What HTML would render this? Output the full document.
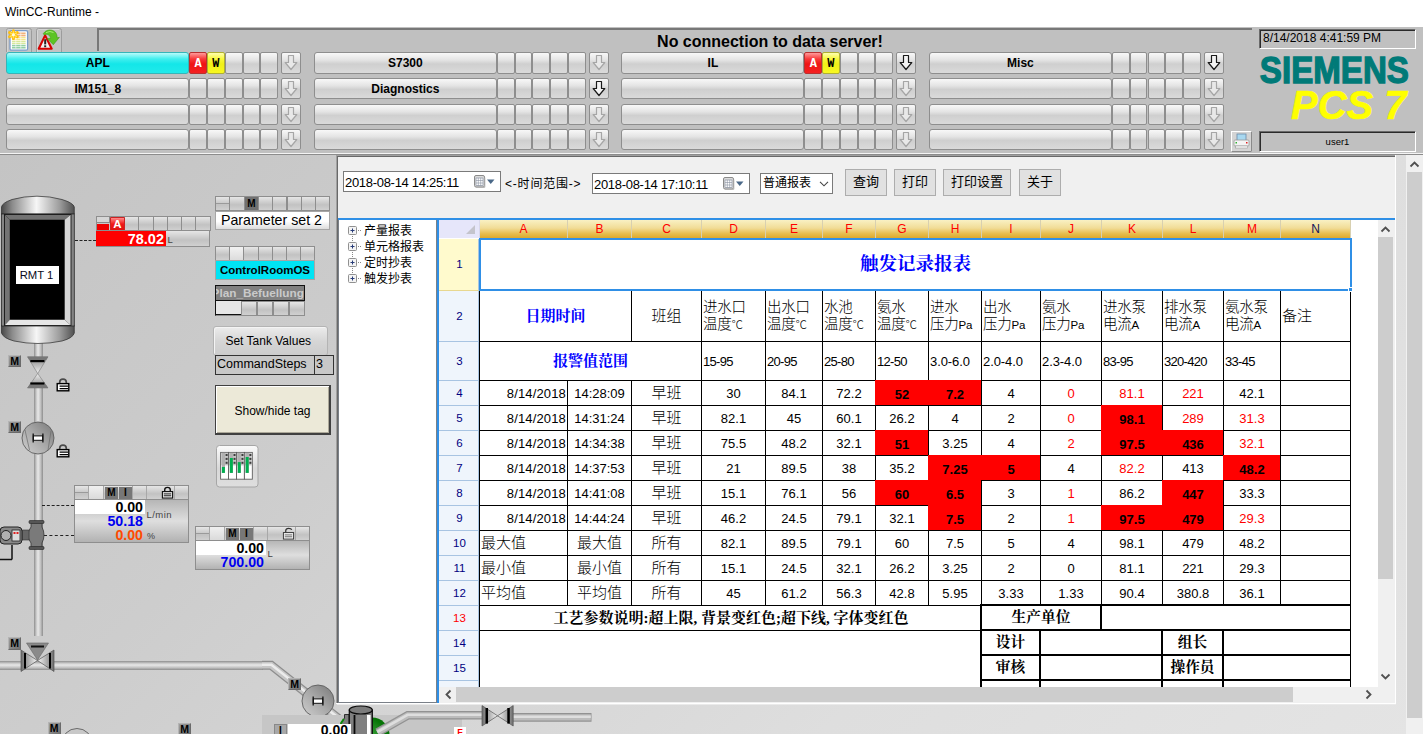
<!DOCTYPE html><html><head><meta charset="utf-8"><title>WinCC-Runtime</title><style>
*{box-sizing:border-box;margin:0;padding:0}
html,body{width:1423px;height:734px;overflow:hidden;background:#c8c8c8;font-family:"Liberation Sans","Noto Sans CJK SC",sans-serif;font-size:12px;color:#000}
.a{position:absolute}
#title{left:0;top:0;width:1423px;height:27px;background:#fff;font-size:12px;line-height:24px;padding-left:5px}
#hdr{left:0;top:27px;width:1423px;height:128px;background:#c0c0c0}
.ab{position:absolute;height:22px;border:1px solid #8e8e8e;border-radius:3px;background:linear-gradient(#f8f8f8 0%,#e4e4e4 35%,#cfcfcf 55%,#dadada 100%);font-weight:bold;font-size:12px;line-height:21px;text-align:center;white-space:nowrap;overflow:hidden}
.ab.cy{background:linear-gradient(#b8fbfb 0%,#3feeee 30%,#14e6e8 55%,#20eaea 100%);border-color:#35b5b8}
.ab.rd{background:linear-gradient(#ff9a9a 0%,#f83838 30%,#ee1414 55%,#f42020 100%);border-color:#b83030;color:#fff;font-family:"Liberation Mono",monospace;font-size:12px;line-height:23px}
.ab.yl{background:linear-gradient(#ffffb0 0%,#f8f838 30%,#f0f018 55%,#f8f820 100%);border-color:#b0b030;font-family:"Liberation Mono",monospace;font-size:12px;line-height:23px}
.sunk{position:absolute;border:1px solid;border-color:#6a6a6a #fff #fff #6a6a6a;box-shadow:inset 1px 1px 0 #2a2a2a}
#proc{left:0;top:155px;width:1423px;height:579px;background:linear-gradient(135deg,#c4c4c4 0%,#cdcdcd 30%,#dedede 70%,#e4e4e4 100%)}
.m{position:absolute;width:13px;height:12.500px;background:linear-gradient(135deg,#9e9e9e,#707070);border:1px solid;border-color:#b4b4b4 #6a6a6a #6a6a6a #b4b4b4;font-weight:bold;font-size:10.500px;line-height:11px;text-align:center}
.sc{position:absolute;border:1px solid #8e8e8e;background:linear-gradient(#e6e6e6,#c2c2c2 60%,#d0d0d0)}
.val{position:absolute;font-weight:bold;font-size:13px;text-align:right;white-space:nowrap}
.unit{position:absolute;font-size:10px;color:#444;white-space:nowrap}
#rp{left:336px;top:155px;width:1060px;height:549px;background:#f0f0f0;border:1px solid #a0a0a0;border-right-color:#fff;border-bottom-color:#fff}
.tb{position:absolute;height:23px;border:1px solid #adadad;background:#e1e1e1;font-size:12px;line-height:20px;text-align:center;font-family:"Liberation Sans","Noto Sans CJK SC",sans-serif;white-space:nowrap}
.di{position:absolute;height:21px;background:#fff;border:1px solid #7a7a7a;font-size:13px;letter-spacing:-0.3px;line-height:21px;padding-left:1px;white-space:nowrap}
.tree{position:absolute;font-size:12px;line-height:16px;white-space:nowrap;font-family:"Liberation Sans","Noto Sans CJK SC",sans-serif}
.c{position:absolute;border-right:1px solid #000;border-bottom:1px solid #000;font-size:13px;text-align:center;white-space:nowrap;overflow:hidden;font-family:"Liberation Sans","Noto Sans CJK SC",sans-serif}
.c.r{background:#f00;font-weight:bold}
.c.rt{color:#f00}
.c.l{text-align:left;padding-left:1px}
.c.rg{text-align:right;padding-right:1px}
.c.zh{font-size:15px;font-weight:300}
.c.dt{letter-spacing:0.15px}
.c i{font-style:normal;font-size:11.500px;letter-spacing:0}
.c.hd{font-size:14.5px;text-align:left;padding-left:1px;line-height:17px;white-space:normal;letter-spacing:-0.3px;font-weight:300}
.c.b{font-weight:bold;font-family:"Liberation Serif","Noto Serif CJK SC",serif}
.rh{position:absolute;left:439px;width:40px;background:#eff5fc;border-bottom:1px solid #a8c4e2;border-right:1px solid #a8c4e2;color:#000080;font-size:11.500px;text-align:center;padding-left:2px}
.ch{position:absolute;top:220px;height:18px;background:linear-gradient(#f9f1c4 0%,#f1dc96 45%,#e6be50 75%,#dca92c 100%);border-right:1px solid #d8d0b0;color:#f00;font-size:12px;line-height:19px;text-align:center}
</style></head><body>
<div class="a" id="title">WinCC-Runtime -</div>
<div class="a" id="hdr">
<svg class="a" style="left:6px;top:1px" width="58" height="24" viewBox="0 0 58 24">
<path d="M0.500 24V2.500Q0.500 0.500 2.500 0.500H23.500Q25.500 0.500 25.500 2.500V24" fill="#c3c3c3" stroke="#9c9c9c"/><path d="M1.500 24V2.500Q1.500 1.500 2.500 1.500H23" fill="none" stroke="#d6d6d6"/>
<path d="M30.500 24V2.500Q30.500 0.500 32.500 0.500H53.500Q55.500 0.500 55.500 2.500V24" fill="#c3c3c3" stroke="#9c9c9c"/><path d="M31.500 24V2.500Q31.500 1.500 32.500 1.500H53" fill="none" stroke="#d6d6d6"/>
<rect x="4" y="2.600" width="17.600" height="19.600" rx="1.500" fill="#fff" stroke="#7c9cc8" stroke-width="1.300"/>
<rect x="6" y="4.500" width="13.600" height="4.500" fill="#f3b37a"/><rect x="6" y="9" width="13.600" height="4" fill="#f4e58a"/><rect x="6" y="13" width="13.600" height="3.500" fill="#d8e89a"/><rect x="6" y="16.500" width="13.600" height="4" fill="#93cfa4"/>
<g stroke="#fff" stroke-width="0.600"><path d="M6 6.500H20M6 8.500H20M6 10.500H20M6 12.500H20M6 14.500H20M6 16.500H20M6 18.500H20M9.800 4.500V20.500M14.800 4.500V20.500"/></g>
<g stroke="#ffbe0a" stroke-width="3" stroke-linecap="round"><path d="M7.400 2.800V10.600M3.600 4.600L11.200 8.800M11.200 4.600L3.600 8.800"/></g>
<g stroke="#ffe45a" stroke-width="1.400" stroke-linecap="round"><path d="M7.400 3.600V9.800M4.400 5L10.400 8.400M10.400 5L4.400 8.400"/></g>
<circle cx="7.400" cy="6.700" r="1.500" fill="#fffbe0"/>
<path d="M39.100 7.400L32.700 20.800H45.700Z" fill="#f2f2f2" stroke="#d60000" stroke-width="2.100" stroke-linejoin="round"/>
<rect x="38.200" y="11.200" width="2" height="5.200" fill="#222"/><rect x="38.200" y="17.300" width="2" height="1.900" fill="#222"/>
<path d="M37.300 5.600Q40.500 1 46 2.200Q51 3.500 51.200 9.800L53.400 9.300L47.300 16.700L41.300 10.600L44.600 10.500Q44.500 7.200 41.500 6.400Q39.500 6 38.200 7Z" fill="#5cc424" stroke="#3f9c12" stroke-width="0.600"/>
<path d="M40 4.600Q44 2.400 47.500 4.500" fill="none" stroke="#a8e878" stroke-width="1"/>
</svg>
<div class="a" style="left:97px;top:1px;width:1155px;height:23px;border-top:2px solid #787878;border-left:2px solid #787878"></div>
<div class="a" style="left:470px;top:5px;width:600px;text-align:center;font-weight:bold;font-size:16px;line-height:20px">No connection to data server!</div>
<div class="ab cy" style="left:6.30px;top:25px;width:183px;height:22px">APL</div>
<div class="ab rd" style="left:189.3px;top:25px;width:17.75px;height:22px;border-radius:2px">A</div>
<div class="ab yl" style="left:207.1px;top:25px;width:17.75px;height:22px;border-radius:2px">W</div>
<div class="ab " style="left:224.8px;top:25px;width:17.75px;height:22px;border-radius:2px"></div>
<div class="ab " style="left:242.6px;top:25px;width:17.75px;height:22px;border-radius:2px"></div>
<div class="ab " style="left:260.3px;top:25px;width:17.75px;height:22px;border-radius:2px"></div>
<div class="ab" style="left:281.30px;top:25px;width:20px;height:22px;border-radius:2px"><svg width="18" height="20" viewBox="0 0 18 20" style="display:block"><path d="M6.500 2.500H11.500V9.500H14.800L9 16.500L3.200 9.500H6.500Z" fill="#e8e8e8" stroke="#a6a6a6" stroke-width="1.200" stroke-linejoin="round"/></svg></div>
<div class="ab " style="left:6.30px;top:51px;width:183px;height:21px">IM151_8</div>
<div class="ab " style="left:189.3px;top:51px;width:17.75px;height:21px;border-radius:2px"></div>
<div class="ab " style="left:207.1px;top:51px;width:17.75px;height:21px;border-radius:2px"></div>
<div class="ab " style="left:224.8px;top:51px;width:17.75px;height:21px;border-radius:2px"></div>
<div class="ab " style="left:242.6px;top:51px;width:17.75px;height:21px;border-radius:2px"></div>
<div class="ab " style="left:260.3px;top:51px;width:17.75px;height:21px;border-radius:2px"></div>
<div class="ab" style="left:281.30px;top:51px;width:20px;height:21px;border-radius:2px"><svg width="18" height="20" viewBox="0 0 18 20" style="display:block"><path d="M6.500 2.500H11.500V9.500H14.800L9 16.500L3.200 9.500H6.500Z" fill="#e8e8e8" stroke="#a6a6a6" stroke-width="1.200" stroke-linejoin="round"/></svg></div>
<div class="ab " style="left:6.30px;top:77px;width:183px;height:21px"></div>
<div class="ab " style="left:189.3px;top:77px;width:17.75px;height:21px;border-radius:2px"></div>
<div class="ab " style="left:207.1px;top:77px;width:17.75px;height:21px;border-radius:2px"></div>
<div class="ab " style="left:224.8px;top:77px;width:17.75px;height:21px;border-radius:2px"></div>
<div class="ab " style="left:242.6px;top:77px;width:17.75px;height:21px;border-radius:2px"></div>
<div class="ab " style="left:260.3px;top:77px;width:17.75px;height:21px;border-radius:2px"></div>
<div class="ab" style="left:281.30px;top:77px;width:20px;height:21px;border-radius:2px"><svg width="18" height="20" viewBox="0 0 18 20" style="display:block"><path d="M6.500 2.500H11.500V9.500H14.800L9 16.500L3.200 9.500H6.500Z" fill="#e8e8e8" stroke="#a6a6a6" stroke-width="1.200" stroke-linejoin="round"/></svg></div>
<div class="ab " style="left:6.30px;top:102px;width:183px;height:21px"></div>
<div class="ab " style="left:189.3px;top:102px;width:17.75px;height:21px;border-radius:2px"></div>
<div class="ab " style="left:207.1px;top:102px;width:17.75px;height:21px;border-radius:2px"></div>
<div class="ab " style="left:224.8px;top:102px;width:17.75px;height:21px;border-radius:2px"></div>
<div class="ab " style="left:242.6px;top:102px;width:17.75px;height:21px;border-radius:2px"></div>
<div class="ab " style="left:260.3px;top:102px;width:17.75px;height:21px;border-radius:2px"></div>
<div class="ab" style="left:281.30px;top:102px;width:20px;height:21px;border-radius:2px"><svg width="18" height="20" viewBox="0 0 18 20" style="display:block"><path d="M6.500 2.500H11.500V9.500H14.800L9 16.500L3.200 9.500H6.500Z" fill="#e8e8e8" stroke="#a6a6a6" stroke-width="1.200" stroke-linejoin="round"/></svg></div>
<div class="ab " style="left:313.85px;top:25px;width:183px;height:22px">S7300</div>
<div class="ab " style="left:496.9px;top:25px;width:17.75px;height:22px;border-radius:2px"></div>
<div class="ab " style="left:514.6px;top:25px;width:17.75px;height:22px;border-radius:2px"></div>
<div class="ab " style="left:532.4px;top:25px;width:17.75px;height:22px;border-radius:2px"></div>
<div class="ab " style="left:550.1px;top:25px;width:17.75px;height:22px;border-radius:2px"></div>
<div class="ab " style="left:567.9px;top:25px;width:17.75px;height:22px;border-radius:2px"></div>
<div class="ab" style="left:588.85px;top:25px;width:20px;height:22px;border-radius:2px"><svg width="18" height="20" viewBox="0 0 18 20" style="display:block"><path d="M6.500 2.500H11.500V9.500H14.800L9 16.500L3.200 9.500H6.500Z" fill="#e8e8e8" stroke="#a6a6a6" stroke-width="1.200" stroke-linejoin="round"/></svg></div>
<div class="ab " style="left:313.85px;top:51px;width:183px;height:21px">Diagnostics</div>
<div class="ab " style="left:496.9px;top:51px;width:17.75px;height:21px;border-radius:2px"></div>
<div class="ab " style="left:514.6px;top:51px;width:17.75px;height:21px;border-radius:2px"></div>
<div class="ab " style="left:532.4px;top:51px;width:17.75px;height:21px;border-radius:2px"></div>
<div class="ab " style="left:550.1px;top:51px;width:17.75px;height:21px;border-radius:2px"></div>
<div class="ab " style="left:567.9px;top:51px;width:17.75px;height:21px;border-radius:2px"></div>
<div class="ab" style="left:588.85px;top:51px;width:20px;height:21px;border-radius:2px"><svg width="18" height="20" viewBox="0 0 18 20" style="display:block"><path d="M6.500 2.500H11.500V9.500H14.800L9 16.500L3.200 9.500H6.500Z" fill="#f4f4f4" stroke="#1a1a1a" stroke-width="1.200" stroke-linejoin="round"/></svg></div>
<div class="ab " style="left:313.85px;top:77px;width:183px;height:21px"></div>
<div class="ab " style="left:496.9px;top:77px;width:17.75px;height:21px;border-radius:2px"></div>
<div class="ab " style="left:514.6px;top:77px;width:17.75px;height:21px;border-radius:2px"></div>
<div class="ab " style="left:532.4px;top:77px;width:17.75px;height:21px;border-radius:2px"></div>
<div class="ab " style="left:550.1px;top:77px;width:17.75px;height:21px;border-radius:2px"></div>
<div class="ab " style="left:567.9px;top:77px;width:17.75px;height:21px;border-radius:2px"></div>
<div class="ab" style="left:588.85px;top:77px;width:20px;height:21px;border-radius:2px"><svg width="18" height="20" viewBox="0 0 18 20" style="display:block"><path d="M6.500 2.500H11.500V9.500H14.800L9 16.500L3.200 9.500H6.500Z" fill="#e8e8e8" stroke="#a6a6a6" stroke-width="1.200" stroke-linejoin="round"/></svg></div>
<div class="ab " style="left:313.85px;top:102px;width:183px;height:21px"></div>
<div class="ab " style="left:496.9px;top:102px;width:17.75px;height:21px;border-radius:2px"></div>
<div class="ab " style="left:514.6px;top:102px;width:17.75px;height:21px;border-radius:2px"></div>
<div class="ab " style="left:532.4px;top:102px;width:17.75px;height:21px;border-radius:2px"></div>
<div class="ab " style="left:550.1px;top:102px;width:17.75px;height:21px;border-radius:2px"></div>
<div class="ab " style="left:567.9px;top:102px;width:17.75px;height:21px;border-radius:2px"></div>
<div class="ab" style="left:588.85px;top:102px;width:20px;height:21px;border-radius:2px"><svg width="18" height="20" viewBox="0 0 18 20" style="display:block"><path d="M6.500 2.500H11.500V9.500H14.800L9 16.500L3.200 9.500H6.500Z" fill="#e8e8e8" stroke="#a6a6a6" stroke-width="1.200" stroke-linejoin="round"/></svg></div>
<div class="ab " style="left:621.40px;top:25px;width:183px;height:22px">IL</div>
<div class="ab rd" style="left:804.4px;top:25px;width:17.75px;height:22px;border-radius:2px">A</div>
<div class="ab yl" style="left:822.1px;top:25px;width:17.75px;height:22px;border-radius:2px">W</div>
<div class="ab " style="left:839.9px;top:25px;width:17.75px;height:22px;border-radius:2px"></div>
<div class="ab " style="left:857.6px;top:25px;width:17.75px;height:22px;border-radius:2px"></div>
<div class="ab " style="left:875.4px;top:25px;width:17.75px;height:22px;border-radius:2px"></div>
<div class="ab" style="left:896.40px;top:25px;width:20px;height:22px;border-radius:2px"><svg width="18" height="20" viewBox="0 0 18 20" style="display:block"><path d="M6.500 2.500H11.500V9.500H14.800L9 16.500L3.200 9.500H6.500Z" fill="#f4f4f4" stroke="#1a1a1a" stroke-width="1.200" stroke-linejoin="round"/></svg></div>
<div class="ab " style="left:621.40px;top:51px;width:183px;height:21px"></div>
<div class="ab " style="left:804.4px;top:51px;width:17.75px;height:21px;border-radius:2px"></div>
<div class="ab " style="left:822.1px;top:51px;width:17.75px;height:21px;border-radius:2px"></div>
<div class="ab " style="left:839.9px;top:51px;width:17.75px;height:21px;border-radius:2px"></div>
<div class="ab " style="left:857.6px;top:51px;width:17.75px;height:21px;border-radius:2px"></div>
<div class="ab " style="left:875.4px;top:51px;width:17.75px;height:21px;border-radius:2px"></div>
<div class="ab" style="left:896.40px;top:51px;width:20px;height:21px;border-radius:2px"><svg width="18" height="20" viewBox="0 0 18 20" style="display:block"><path d="M6.500 2.500H11.500V9.500H14.800L9 16.500L3.200 9.500H6.500Z" fill="#e8e8e8" stroke="#a6a6a6" stroke-width="1.200" stroke-linejoin="round"/></svg></div>
<div class="ab " style="left:621.40px;top:77px;width:183px;height:21px"></div>
<div class="ab " style="left:804.4px;top:77px;width:17.75px;height:21px;border-radius:2px"></div>
<div class="ab " style="left:822.1px;top:77px;width:17.75px;height:21px;border-radius:2px"></div>
<div class="ab " style="left:839.9px;top:77px;width:17.75px;height:21px;border-radius:2px"></div>
<div class="ab " style="left:857.6px;top:77px;width:17.75px;height:21px;border-radius:2px"></div>
<div class="ab " style="left:875.4px;top:77px;width:17.75px;height:21px;border-radius:2px"></div>
<div class="ab" style="left:896.40px;top:77px;width:20px;height:21px;border-radius:2px"><svg width="18" height="20" viewBox="0 0 18 20" style="display:block"><path d="M6.500 2.500H11.500V9.500H14.800L9 16.500L3.200 9.500H6.500Z" fill="#e8e8e8" stroke="#a6a6a6" stroke-width="1.200" stroke-linejoin="round"/></svg></div>
<div class="ab " style="left:621.40px;top:102px;width:183px;height:21px"></div>
<div class="ab " style="left:804.4px;top:102px;width:17.75px;height:21px;border-radius:2px"></div>
<div class="ab " style="left:822.1px;top:102px;width:17.75px;height:21px;border-radius:2px"></div>
<div class="ab " style="left:839.9px;top:102px;width:17.75px;height:21px;border-radius:2px"></div>
<div class="ab " style="left:857.6px;top:102px;width:17.75px;height:21px;border-radius:2px"></div>
<div class="ab " style="left:875.4px;top:102px;width:17.75px;height:21px;border-radius:2px"></div>
<div class="ab" style="left:896.40px;top:102px;width:20px;height:21px;border-radius:2px"><svg width="18" height="20" viewBox="0 0 18 20" style="display:block"><path d="M6.500 2.500H11.500V9.500H14.800L9 16.500L3.200 9.500H6.500Z" fill="#e8e8e8" stroke="#a6a6a6" stroke-width="1.200" stroke-linejoin="round"/></svg></div>
<div class="ab " style="left:928.95px;top:25px;width:183px;height:22px">Misc</div>
<div class="ab " style="left:1112.0px;top:25px;width:17.75px;height:22px;border-radius:2px"></div>
<div class="ab " style="left:1129.7px;top:25px;width:17.75px;height:22px;border-radius:2px"></div>
<div class="ab " style="left:1147.5px;top:25px;width:17.75px;height:22px;border-radius:2px"></div>
<div class="ab " style="left:1165.2px;top:25px;width:17.75px;height:22px;border-radius:2px"></div>
<div class="ab " style="left:1183.0px;top:25px;width:17.75px;height:22px;border-radius:2px"></div>
<div class="ab" style="left:1203.95px;top:25px;width:20px;height:22px;border-radius:2px"><svg width="18" height="20" viewBox="0 0 18 20" style="display:block"><path d="M6.500 2.500H11.500V9.500H14.800L9 16.500L3.200 9.500H6.500Z" fill="#f4f4f4" stroke="#1a1a1a" stroke-width="1.200" stroke-linejoin="round"/></svg></div>
<div class="ab " style="left:928.95px;top:51px;width:183px;height:21px"></div>
<div class="ab " style="left:1112.0px;top:51px;width:17.75px;height:21px;border-radius:2px"></div>
<div class="ab " style="left:1129.7px;top:51px;width:17.75px;height:21px;border-radius:2px"></div>
<div class="ab " style="left:1147.5px;top:51px;width:17.75px;height:21px;border-radius:2px"></div>
<div class="ab " style="left:1165.2px;top:51px;width:17.75px;height:21px;border-radius:2px"></div>
<div class="ab " style="left:1183.0px;top:51px;width:17.75px;height:21px;border-radius:2px"></div>
<div class="ab" style="left:1203.95px;top:51px;width:20px;height:21px;border-radius:2px"><svg width="18" height="20" viewBox="0 0 18 20" style="display:block"><path d="M6.500 2.500H11.500V9.500H14.800L9 16.500L3.200 9.500H6.500Z" fill="#e8e8e8" stroke="#a6a6a6" stroke-width="1.200" stroke-linejoin="round"/></svg></div>
<div class="ab " style="left:928.95px;top:77px;width:183px;height:21px"></div>
<div class="ab " style="left:1112.0px;top:77px;width:17.75px;height:21px;border-radius:2px"></div>
<div class="ab " style="left:1129.7px;top:77px;width:17.75px;height:21px;border-radius:2px"></div>
<div class="ab " style="left:1147.5px;top:77px;width:17.75px;height:21px;border-radius:2px"></div>
<div class="ab " style="left:1165.2px;top:77px;width:17.75px;height:21px;border-radius:2px"></div>
<div class="ab " style="left:1183.0px;top:77px;width:17.75px;height:21px;border-radius:2px"></div>
<div class="ab" style="left:1203.95px;top:77px;width:20px;height:21px;border-radius:2px"><svg width="18" height="20" viewBox="0 0 18 20" style="display:block"><path d="M6.500 2.500H11.500V9.500H14.800L9 16.500L3.200 9.500H6.500Z" fill="#e8e8e8" stroke="#a6a6a6" stroke-width="1.200" stroke-linejoin="round"/></svg></div>
<div class="ab " style="left:928.95px;top:102px;width:183px;height:21px"></div>
<div class="ab " style="left:1112.0px;top:102px;width:17.75px;height:21px;border-radius:2px"></div>
<div class="ab " style="left:1129.7px;top:102px;width:17.75px;height:21px;border-radius:2px"></div>
<div class="ab " style="left:1147.5px;top:102px;width:17.75px;height:21px;border-radius:2px"></div>
<div class="ab " style="left:1165.2px;top:102px;width:17.75px;height:21px;border-radius:2px"></div>
<div class="ab " style="left:1183.0px;top:102px;width:17.75px;height:21px;border-radius:2px"></div>
<div class="ab" style="left:1203.95px;top:102px;width:20px;height:21px;border-radius:2px"><svg width="18" height="20" viewBox="0 0 18 20" style="display:block"><path d="M6.500 2.500H11.500V9.500H14.800L9 16.500L3.200 9.500H6.500Z" fill="#e8e8e8" stroke="#a6a6a6" stroke-width="1.200" stroke-linejoin="round"/></svg></div>
<div class="sunk" style="left:1259px;top:2px;width:157px;height:20px;font-size:12px;line-height:16px;padding-left:3px">8/14/2018 4:41:59 PM</div>
<div class="a" style="left:1258px;top:24px;width:160px;font-weight:bold;font-size:36px;line-height:40px;color:#007a78;-webkit-text-stroke:1.300px #007a78;transform:scaleX(0.920);transform-origin:0 0;white-space:nowrap;padding-left:2px">SIEMENS</div>
<div class="a" style="left:1291px;top:56px;width:130px;font-weight:bold;font-style:italic;font-size:40px;line-height:44px;color:#ffff00;-webkit-text-stroke:0.600px #ffff00;white-space:nowrap">PCS 7</div>
<div class="sunk" style="left:1259px;top:104px;width:157px;height:21px;font-size:9.500px;line-height:19px;text-align:center">user1</div>
<svg class="a" style="left:1231px;top:104px" width="21" height="21" viewBox="0 0 21 21"><rect x="0.500" y="0.500" width="20" height="20" fill="#d4d4d4" stroke="#fff"/><path d="M20.500 0.500V20.500H0.500" fill="none" stroke="#8a8a8a"/>
<rect x="6" y="3" width="9" height="7" fill="#a8d8f0" stroke="#6a8aa8" stroke-width="0.800"/><rect x="3" y="9" width="15" height="6" rx="1" fill="#f4f4f4" stroke="#9a9a9a" stroke-width="0.800"/><rect x="4.500" y="15" width="12" height="2" fill="#fff" stroke="#9a9a9a" stroke-width="0.600"/><rect x="15" y="11" width="1.500" height="1.500" fill="#e02020"/><rect x="4.500" y="11" width="1.500" height="1.500" fill="#30b030"/></svg>
<div class="a" style="left:0;top:126px;width:1423px;height:1px;background:#f4f4f4"></div>
<div class="a" style="left:0;top:127px;width:1423px;height:1px;background:#8c8c8c"></div>
</div>
<div class="a" id="proc">
<div class="a" style="left:34px;top:187px;width:8.500px;height:15.5px;background:linear-gradient(90deg,#8e8e8e 0%,#c8c8c8 25%,#e8e8e8 45%,#c4c4c4 72%,#8e8e8e 100%)"></div>
<div class="a" style="left:34px;top:232.5px;width:8.500px;height:37.5px;background:linear-gradient(90deg,#8e8e8e 0%,#c8c8c8 25%,#e8e8e8 45%,#c4c4c4 72%,#8e8e8e 100%)"></div>
<div class="a" style="left:34px;top:297px;width:8.500px;height:184px;background:linear-gradient(90deg,#8e8e8e 0%,#c8c8c8 25%,#e8e8e8 45%,#c4c4c4 72%,#8e8e8e 100%)"></div>
<svg class="a" style="left:0;top:39px" width="78" height="152" viewBox="0 194 78 152">
<defs><linearGradient id="tg" x1="0" x2="1" y1="0" y2="0"><stop offset="0" stop-color="#484848"/><stop offset="0.150" stop-color="#8c8c8c"/><stop offset="0.480" stop-color="#f6f6f6"/><stop offset="0.800" stop-color="#9c9c9c"/><stop offset="1" stop-color="#505050"/></linearGradient></defs>
<path d="M1.500 214V207Q2 203 12 199.500Q24 196.200 37 196.200Q50 196.200 62 199.500Q73.500 203 74.300 207V214Z" fill="url(#tg)" stroke="#2a2a2a" stroke-width="0.700"/>
<path d="M1.500 325.500V333Q3 338 14 341Q26 343.500 38 343.500Q50 343.500 62 341Q73 338 74.300 333V325.500Z" fill="url(#tg)" stroke="#2a2a2a" stroke-width="0.700"/>
<rect x="1.500" y="214" width="72.800" height="112" fill="#848484" stroke="#2a2a2a" stroke-width="0.800"/>
<rect x="4.500" y="214.500" width="66.500" height="111" fill="#000"/>
<path d="M4.500 214.500H71L64.700 219.800H9.800Z" fill="#727272"/><path d="M4.500 214.500L9.800 219.800V319.700L4.500 325.500Z" fill="#747474"/>
<path d="M71 214.500L64.700 219.800V319.700L71 325.500Z" fill="#d6d6d6"/><path d="M4.500 325.500L9.800 319.700H64.700L71 325.500Z" fill="#e6e6e6"/>
<rect x="4.500" y="214.500" width="66.500" height="111" fill="none" stroke="#1a1a1a" stroke-width="0.900"/>
<rect x="16" y="266" width="43" height="18" fill="#fff"/>
<text x="36.500" y="279" font-family="Liberation Sans,sans-serif" font-size="11.300" text-anchor="middle" fill="#0a0a20">RMT 1</text>
</svg>
<div class="a" style="left:75px;top:85px;width:21px;height:0;border-top:1px dashed #222"></div>
<div class="sc" style="left:95.5px;top:61px;width:15.25px;height:15px"></div>
<div class="sc" style="left:109.75px;top:61px;width:15.25px;height:15px"></div>
<div class="sc" style="left:124.0px;top:61px;width:15.25px;height:15px"></div>
<div class="sc" style="left:138.25px;top:61px;width:15.25px;height:15px"></div>
<div class="sc" style="left:152.5px;top:61px;width:15.25px;height:15px"></div>
<div class="sc" style="left:166.75px;top:61px;width:15.25px;height:15px"></div>
<div class="sc" style="left:181.0px;top:61px;width:15.25px;height:15px"></div>
<div class="sc" style="left:195.25px;top:61px;width:15.25px;height:15px"></div>
<div class="a" style="left:96.500px;top:62px;width:13px;height:6px;background:#d6d6d6;border:1px solid #8a8a8a;border-top:none;border-left:none"></div>
<div class="a" style="left:96.500px;top:69px;width:12.500px;height:6px;background:#f00000"></div>
<div class="a" style="left:110px;top:62px;width:15px;height:14px;border:1px solid #c22;border-radius:1px;background:linear-gradient(#ff8a8a,#f01818 50%,#e01010);color:#fff;font-weight:bold;font-size:11.500px;line-height:12px;text-align:center">A</div>
<div class="sc" style="left:95.500px;top:75px;width:114.500px;height:16.500px"></div>
<div class="a" style="left:96px;top:75.5px;width:70px;height:15.500px;background:#ff0000"></div>
<div class="val" style="left:96px;top:75.5px;width:68px;height:16px;line-height:16px;color:#fff;font-size:14.500px">78.02</div>
<div class="unit" style="left:167.500px;top:78px;line-height:14px;font-size:9.500px">L</div>
<div class="sc" style="left:215.0px;top:41px;width:15.3px;height:15px"></div>
<div class="sc" style="left:229.3px;top:41px;width:15.3px;height:15px"></div>
<div class="sc" style="left:243.6px;top:41px;width:15.3px;height:15px"></div>
<div class="sc" style="left:257.9px;top:41px;width:15.3px;height:15px"></div>
<div class="sc" style="left:272.2px;top:41px;width:15.3px;height:15px"></div>
<div class="sc" style="left:286.5px;top:41px;width:15.3px;height:15px"></div>
<div class="sc" style="left:300.8px;top:41px;width:15.3px;height:15px"></div>
<div class="sc" style="left:315.1px;top:41px;width:15.3px;height:15px"></div>
<div class="a" style="left:216px;top:48px;width:13px;height:1px;background:#9a9a9a"></div>
<div class="a" style="left:245px;top:42px;width:13px;height:13px;background:#707070;font-weight:bold;font-size:10px;line-height:13px;text-align:center">M</div>
<div class="a" style="left:215px;top:56px;width:115px;height:19px;border:1px solid #a6a6a6;background:linear-gradient(#fff 55%,#dcdcdc);font-size:14.200px;line-height:16px;padding-left:5px;white-space:nowrap">Parameter set 2</div>
<div class="sc" style="left:215.0px;top:91px;width:15.2px;height:15px"></div>
<div class="sc" style="left:229.2px;top:91px;width:15.2px;height:15px"></div>
<div class="sc" style="left:243.4px;top:91px;width:15.2px;height:15px"></div>
<div class="sc" style="left:257.6px;top:91px;width:15.2px;height:15px"></div>
<div class="sc" style="left:271.8px;top:91px;width:15.2px;height:15px"></div>
<div class="sc" style="left:286.0px;top:91px;width:15.2px;height:15px"></div>
<div class="sc" style="left:300.2px;top:91px;width:15.2px;height:15px"></div>
<div class="a" style="left:230px;top:92px;width:13px;height:13px;background:linear-gradient(#f2f2f2,#dcdcdc)"></div>
<div class="a" style="left:215px;top:105px;width:100px;height:20px;border:1px solid #a6a6a6;background:#00e4f4;font-weight:bold;font-size:11.500px;line-height:18px;text-align:center;white-space:nowrap">ControlRoomOS</div>
<div class="a" style="left:215px;top:130px;width:90px;height:16px;border:1px solid #111;background:#808080;color:#cacaca;font-weight:bold;font-size:11.800px;line-height:14px;white-space:nowrap;overflow:hidden;direction:rtl;text-align:right">Plan_Befuellung</div>
<div class="sc" style="left:215px;top:145.5px;width:90px;height:15.500px;border-color:#111 #8e8e8e #8e8e8e #111"></div>
<div class="a" style="left:216px;top:146px;width:25px;height:13.500px;background:#e6e6e6;border-bottom:1px solid #111"></div>
<div class="sc" style="left:240.5px;top:145.5px;width:16.500px;height:15.500px"></div>
<div class="sc" style="left:256.5px;top:145.5px;width:16.500px;height:15.500px"></div>
<div class="sc" style="left:272.5px;top:145.5px;width:16.500px;height:15.500px"></div>
<div class="sc" style="left:288.5px;top:145.5px;width:16.500px;height:15.500px"></div>
<div class="a" style="left:212.500px;top:171px;width:115.500px;height:30px;padding-right:4px;border:1px solid #b4b4b4;border-radius:3px;background:linear-gradient(#ececec,#d6d6d6 50%,#cccccc);box-shadow:inset 1px 1px 0 #f4f4f4;font-size:12px;line-height:29px;text-align:center">Set Tank Values</div>
<div class="a" style="left:215px;top:200px;width:119px;height:20px;border:1px solid #333;background:#c8c8c8;font-size:12.500px;line-height:17px;padding-left:1px;white-space:nowrap">CommandSteps<div class="a" style="left:98px;top:0;width:1px;height:18px;background:#333"></div><span class="a" style="left:100px;top:0">3</span></div>
<div class="a" style="left:215px;top:230px;width:116px;height:50px;background:#ece9d8;border:1px solid #404040;border-right-width:2px;border-bottom-width:2px;box-shadow:inset 1px 1px 0 #fff,inset -1px -1px 0 #aca899;font-size:12px;line-height:50px;text-align:center">Show/hide tag</div>
<svg class="a" style="left:215.500px;top:290.3px" width="43" height="43" viewBox="0 0 43 43"><defs><linearGradient id="ib" x1="0" y1="0" x2="0" y2="1"><stop offset="0" stop-color="#fbfbfb"/><stop offset="0.550" stop-color="#d8d8d8"/><stop offset="1" stop-color="#dedede"/></linearGradient></defs>
<rect x="0.500" y="0.500" width="41.500" height="41.500" rx="3" fill="url(#ib)" stroke="#a6a6a6"/>
<g transform="translate(0.500,1.400)"><rect x="4.10" y="6" width="7.93" height="26.800" fill="#fff" stroke="#5e5e5e" stroke-width="0.900"/><rect x="4.60" y="6.500" width="6.900" height="12.500" fill="#c4c4c4"/><rect x="5.30" y="6.500" width="3.200" height="20" fill="#b0b0b0"/><rect x="5.40" y="20.6" width="3" height="5.9" fill="#00b050"/><rect x="9.10" y="7.6" width="2" height="2" fill="#3c3c3c"/><rect x="9.10" y="11.5" width="2" height="2" fill="#3c3c3c"/><rect x="9.10" y="15.4" width="2" height="2" fill="#3c3c3c"/><rect x="12.03" y="6" width="7.93" height="26.800" fill="#fff" stroke="#5e5e5e" stroke-width="0.900"/><rect x="12.53" y="6.500" width="6.900" height="12.500" fill="#c4c4c4"/><rect x="13.23" y="6.500" width="3.200" height="20" fill="#b0b0b0"/><rect x="13.33" y="11.6" width="3" height="14.9" fill="#00b050"/><rect x="17.03" y="7.6" width="2" height="2" fill="#3c3c3c"/><rect x="17.03" y="11.5" width="2" height="2" fill="#3c3c3c"/><rect x="17.03" y="15.4" width="2" height="2" fill="#3c3c3c"/><rect x="19.96" y="6" width="7.93" height="26.800" fill="#fff" stroke="#5e5e5e" stroke-width="0.900"/><rect x="20.46" y="6.500" width="6.900" height="12.500" fill="#c4c4c4"/><rect x="21.16" y="6.500" width="3.200" height="20" fill="#b0b0b0"/><rect x="21.26" y="15.7" width="3" height="10.8" fill="#00b050"/><rect x="24.96" y="7.6" width="2" height="2" fill="#3c3c3c"/><rect x="24.96" y="11.5" width="2" height="2" fill="#3c3c3c"/><rect x="24.96" y="15.4" width="2" height="2" fill="#3c3c3c"/><rect x="27.89" y="6" width="7.93" height="26.800" fill="#fff" stroke="#5e5e5e" stroke-width="0.900"/><rect x="28.39" y="6.500" width="6.900" height="12.500" fill="#c4c4c4"/><rect x="29.09" y="6.500" width="3.200" height="20" fill="#b0b0b0"/><rect x="29.19" y="10.6" width="3" height="15.9" fill="#00b050"/><rect x="32.89" y="7.6" width="2" height="2" fill="#3c3c3c"/><rect x="32.89" y="11.5" width="2" height="2" fill="#3c3c3c"/><rect x="32.89" y="15.4" width="2" height="2" fill="#3c3c3c"/></g></svg>
<svg class="a" style="left:26px;top:200px" width="24" height="34" viewBox="26 355 24 34">
<defs><linearGradient id="vg" x1="0" x2="0" y1="0" y2="1"><stop offset="0" stop-color="#7c7c7c"/><stop offset="0.450" stop-color="#b4b4b4"/><stop offset="1" stop-color="#f0f0f0"/></linearGradient><linearGradient id="vg2" x1="0" x2="0" y1="1" y2="0"><stop offset="0" stop-color="#7c7c7c"/><stop offset="0.450" stop-color="#b4b4b4"/><stop offset="1" stop-color="#f0f0f0"/></linearGradient></defs>
<path d="M27.500 356.800H48L37.700 373.500Z" fill="url(#vg)" stroke="#6a6a6a" stroke-width="0.500"/><path d="M27.500 388H48L37.700 373.500Z" fill="url(#vg2)" stroke="#6a6a6a" stroke-width="0.500"/>
<path d="M27.500 356.800H48L46 360H29.500Z" fill="#777"/><path d="M27.500 388H48L45.800 384.600H29.700Z" fill="#777"/>
<rect x="30.300" y="360" width="14.200" height="2.200" fill="#000"/><rect x="30.300" y="382.400" width="14.200" height="2.200" fill="#000"/></svg>
<svg class="a" style="left:55.5px;top:222.5px" width="14" height="14" viewBox="0 0 14 14"><path d="M3.700 6V4.300Q3.700 1.200 7 1.200Q10.300 1.200 10.300 4.300V6" fill="none" stroke="#4a4a4a" stroke-width="1.700"/><rect x="1.200" y="5.600" width="11.600" height="7.200" fill="#fff" stroke="#000" stroke-width="1.400"/><path d="M3.600 8.200H12M3.600 10.600H12" stroke="#000" stroke-width="1.200"/></svg>
<svg class="a" style="left:55.5px;top:288.5px" width="14" height="14" viewBox="0 0 14 14"><path d="M3.700 6V4.300Q3.700 1.200 7 1.200Q10.300 1.200 10.300 4.300V6" fill="none" stroke="#4a4a4a" stroke-width="1.700"/><rect x="1.200" y="5.600" width="11.600" height="7.200" fill="#fff" stroke="#000" stroke-width="1.400"/><path d="M3.600 8.200H12M3.600 10.600H12" stroke="#000" stroke-width="1.200"/></svg>
<svg class="a" style="left:19.6px;top:265.3px" width="36" height="36" viewBox="0 0 36 36"><defs><linearGradient id="pg1" x1="1" y1="0" x2="0" y2="1"><stop offset="0" stop-color="#787878"/><stop offset="0.500" stop-color="#a8a8a8"/><stop offset="1" stop-color="#d0d0d0"/></linearGradient></defs><circle cx="18" cy="18" r="16" fill="url(#pg1)" stroke="#5e5e5e" stroke-width="0.900"/><path d="M5 10L9.500 30M31 11L28 30" stroke="#6a6a6a" stroke-width="0.700" fill="none"/><rect x="13.300" y="15.900" width="9.400" height="4.400" fill="#fff" stroke="#111" stroke-width="1"/><path d="M13.200 13.600V22.600M22.900 13.600V22.600" stroke="#111" stroke-width="1.300" fill="none"/></svg>
<div class="sc" style="left:74px;top:330px;width:115px;height:15px"></div>
<div class="sc" style="left:74px;top:344px;width:115px;height:44px;background:linear-gradient(#b6b6b6,#dedede 50%,#b2b2b2)"></div>
<div class="a" style="left:88px;top:331px;width:1px;height:13px;background:#a8a8a8"></div>
<div class="a" style="left:103px;top:331px;width:1px;height:13px;background:#a8a8a8"></div>
<div class="a" style="left:132px;top:331px;width:1px;height:13px;background:#a8a8a8"></div>
<div class="a" style="left:146px;top:331px;width:1px;height:13px;background:#a8a8a8"></div>
<div class="a" style="left:174px;top:331px;width:1px;height:13px;background:#a8a8a8"></div>
<div class="a" style="left:75px;top:337px;width:13px;height:1px;background:#9a9a9a"></div>
<div class="a" style="left:89px;top:331px;width:14px;height:13px;background:linear-gradient(#f0f0f0,#dadada)"></div>
<div class="a" style="left:105px;top:332px;width:13px;height:12px;background:#777;font-weight:bold;font-size:10px;line-height:12px;text-align:center">M</div>
<div class="a" style="left:119px;top:332px;width:13px;height:12px;background:#777;font-weight:bold;font-size:10px;line-height:12px;text-align:center">I</div>
<svg class="a" style="left:161px;top:331px" width="13" height="13" viewBox="0 0 14 14"><path d="M4 6V4Q4 1.500 7 1.500Q10 1.500 10 4V6" fill="none" stroke="#111" stroke-width="1.500"/><rect x="1.500" y="6" width="11" height="7" fill="#e8e8e8" stroke="#111" stroke-width="1.200"/><path d="M3 8.500H11M3 10.500H11" stroke="#111" stroke-width="1"/></svg>
<div class="a" style="left:75px;top:345px;width:70px;height:14px;background:#fff"></div>
<div class="val" style="left:75px;top:345px;width:68px;line-height:15px;font-size:14.200px">0.00</div>
<div class="val" style="left:75px;top:359px;width:68px;line-height:15px;font-size:14.200px;color:#0000f0">50.18</div>
<div class="val" style="left:75px;top:373px;width:68px;line-height:15px;font-size:14.200px;color:#ff4a00">0.00</div>
<div class="unit" style="left:146.500px;top:353.5px;line-height:12px;font-size:9.500px;letter-spacing:0.450px">L/min</div>
<div class="unit" style="left:147px;top:375px;line-height:12px;font-size:9px">%</div>
<div class="a" style="left:42px;top:350px;width:32px;height:0;border-top:1px dashed #222"></div>
<div class="a" style="left:44px;top:380px;width:30px;height:0;border-top:1px dashed #222"></div>
<svg class="a" style="left:0;top:363px" width="46" height="48" viewBox="0 518 46 48">
<path d="M12 559.500H0" stroke="#111" stroke-width="1.500" fill="none"/><path d="M12 545V559.500" stroke="#111" stroke-width="1.500"/>
<rect x="29" y="520.500" width="15" height="3" rx="1" fill="#555" stroke="#222" stroke-width="0.600"/><rect x="29" y="546.500" width="15" height="3" rx="1" fill="#555" stroke="#222" stroke-width="0.600"/>
<path d="M31 523.500H42V527Q44 531 44 535Q44 539 42 543V546.500H31V543Q28 539 28 535Q28 531 31 527Z" fill="#7a7a7a" stroke="#333" stroke-width="0.800"/>
<rect x="22" y="530" width="7" height="10" fill="#666" stroke="#333" stroke-width="0.600"/>
<rect x="0" y="527" width="22" height="17" rx="4" fill="#888" stroke="#222" stroke-width="1"/>
<circle cx="6" cy="535.500" r="5" fill="#b0b0b0" stroke="#222"/><rect x="12" y="530" width="8" height="11" fill="#ddd" stroke="#222" stroke-width="0.800"/><rect x="13.500" y="532" width="2" height="2" fill="#e02020"/><rect x="16.500" y="532" width="2" height="2" fill="#e02020"/>
</svg>
<div class="sc" style="left:195px;top:371px;width:115px;height:15px"></div>
<div class="sc" style="left:195px;top:385px;width:115px;height:30px;background:linear-gradient(#b6b6b6,#dedede 50%,#b2b2b2)"></div>
<div class="a" style="left:209px;top:372px;width:1px;height:13px;background:#a8a8a8"></div>
<div class="a" style="left:224px;top:372px;width:1px;height:13px;background:#a8a8a8"></div>
<div class="a" style="left:253px;top:372px;width:1px;height:13px;background:#a8a8a8"></div>
<div class="a" style="left:267px;top:372px;width:1px;height:13px;background:#a8a8a8"></div>
<div class="a" style="left:295px;top:372px;width:1px;height:13px;background:#a8a8a8"></div>
<div class="a" style="left:196px;top:378px;width:13px;height:1px;background:#9a9a9a"></div>
<div class="a" style="left:210px;top:372px;width:14px;height:13px;background:linear-gradient(#f0f0f0,#dadada)"></div>
<div class="a" style="left:226px;top:373px;width:13px;height:12px;background:#777;font-weight:bold;font-size:10px;line-height:12px;text-align:center">M</div>
<div class="a" style="left:240px;top:373px;width:13px;height:12px;background:#777;font-weight:bold;font-size:10px;line-height:12px;text-align:center">I</div>
<svg class="a" style="left:282px;top:372px" width="13" height="13" viewBox="0 0 14 14"><path d="M4 6V4Q4 1.500 7 1.500Q10 1.500 10.500 3" fill="none" stroke="#333" stroke-width="1.300"/><rect x="1.500" y="6" width="11" height="7" fill="#f0f0f0" stroke="#333" stroke-width="1"/><path d="M3 8.500H11M3 10.500H11" stroke="#666" stroke-width="1"/></svg>
<div class="a" style="left:196px;top:386px;width:70px;height:14px;background:#fff"></div>
<div class="val" style="left:196px;top:386px;width:68px;line-height:15px;font-size:14.200px">0.00</div>
<div class="val" style="left:196px;top:400px;width:68px;line-height:15px;font-size:14.200px;color:#0000f0">700.00</div>
<div class="unit" style="left:267.500px;top:393px;line-height:12px;font-size:9.500px">L</div>
<div class="a" style="left:0;top:506px;width:263px;height:8.600px;background:linear-gradient(180deg,#8e8e8e 0%,#c8c8c8 25%,#e8e8e8 45%,#c4c4c4 72%,#8e8e8e 100%)"></div>
<svg class="a" style="left:262px;top:500px" width="100" height="80" viewBox="262 655 100 80">
<path d="M262 665.300H271.200L354 730.700" stroke="#8e8e8e" stroke-width="9" fill="none"/><path d="M262 665.300H271.200L354 730.700" stroke="#c6c6c6" stroke-width="6.500" fill="none"/><path d="M262 664.800H271.400L354 730.200" stroke="#ececec" stroke-width="2.500" fill="none"/></svg>
<svg class="a" style="left:20px;top:486px" width="36" height="32" viewBox="20 641 36 32">
<path d="M26.500 643H48.500L37.500 660Z" fill="#8a8a8a" stroke="#666" stroke-width="0.600"/><path d="M31 646.500H44" stroke="#111" stroke-width="2"/>
<defs><linearGradient id="hw1" x1="0" x2="1"><stop offset="0" stop-color="#6c6c6c"/><stop offset="0.350" stop-color="#a0a0a0"/><stop offset="1" stop-color="#f6f6f6"/></linearGradient><linearGradient id="hw2" x1="1" x2="0"><stop offset="0" stop-color="#6c6c6c"/><stop offset="0.350" stop-color="#a0a0a0"/><stop offset="1" stop-color="#f6f6f6"/></linearGradient></defs><path d="M21 650V671.500L37.500 660.500Z" fill="url(#hw1)" stroke="#555" stroke-width="0.700"/><path d="M54 650V671.500L37.500 660.500Z" fill="url(#hw2)" stroke="#555" stroke-width="0.700"/>
<rect x="24" y="653" width="2" height="15.500" fill="#000"/><rect x="49" y="653" width="2" height="15.500" fill="#000"/></svg>
<svg class="a" style="left:299.5px;top:527.5px" width="36" height="36" viewBox="0 0 36 36"><defs><linearGradient id="pg2" x1="1" y1="0" x2="0" y2="1"><stop offset="0" stop-color="#787878"/><stop offset="0.500" stop-color="#a8a8a8"/><stop offset="1" stop-color="#d0d0d0"/></linearGradient></defs><circle cx="18" cy="18" r="16" fill="url(#pg2)" stroke="#5e5e5e" stroke-width="0.900"/><rect x="13.300" y="15.900" width="9.400" height="4.400" fill="#fff" stroke="#111" stroke-width="1"/><path d="M13.200 13.600V22.600M22.900 13.600V22.600" stroke="#111" stroke-width="1.300" fill="none"/></svg>
<svg class="a" style="left:60px;top:572px" width="34" height="8" viewBox="0 0 34 8"><circle cx="17" cy="17" r="15.500" fill="#c8c8c8" stroke="#6a6a6a"/></svg>
<div class="a" style="left:262px;top:560px;width:200px;height:20px;background:#c6c6c6"></div>
<svg class="a" style="left:340px;top:549px" width="54" height="31" viewBox="340 704 54 31"><defs><radialGradient id="gg" cx="0.350" cy="0.600" r="0.600"><stop offset="0" stop-color="#4cb04c"/><stop offset="1" stop-color="#067406"/></radialGradient></defs>
<circle cx="372" cy="735" r="17.500" fill="url(#gg)"/>
<path d="M341.500 722L344.500 718V714.500H349V734H341.500Z" fill="#7e7e7e" stroke="#111" stroke-width="0.800"/><path d="M340.500 724L343.800 719" stroke="#0a8a0a" stroke-width="2"/>
<path d="M349.300 710V735H372.300V710Z" fill="#808080" stroke="#0a0a0a" stroke-width="1.200"/><ellipse cx="360.800" cy="710" rx="11.500" ry="4" fill="#7c7c7c" stroke="#0a0a0a" stroke-width="1.200"/>
<rect x="353.600" y="715" width="1.800" height="20" fill="#0a0a0a"/><rect x="367" y="715" width="3.600" height="20" fill="#fff"/></svg>
<svg class="a" style="left:372px;top:549px" width="224" height="31" viewBox="372 704 224 31">
<defs><linearGradient id="hv1" x1="0" x2="1"><stop offset="0" stop-color="#6c6c6c"/><stop offset="0.350" stop-color="#a0a0a0"/><stop offset="1" stop-color="#f6f6f6"/></linearGradient><linearGradient id="hv2" x1="1" x2="0"><stop offset="0" stop-color="#6c6c6c"/><stop offset="0.350" stop-color="#a0a0a0"/><stop offset="1" stop-color="#f6f6f6"/></linearGradient></defs>
<path d="M377.500 732.500L407.800 715.300H483" fill="none" stroke="#929292" stroke-width="8.600"/><path d="M377.500 732.500L407.800 715.300H483" fill="none" stroke="#bcbcbc" stroke-width="6"/><path d="M377.300 732L407.600 714.800H483" fill="none" stroke="#dedede" stroke-width="2.600"/>
<path d="M512 717.300H591.500" stroke="#929292" stroke-width="8.800"/><path d="M512 717.300H590.800" stroke="#bcbcbc" stroke-width="6.200"/><path d="M512 716.800H590.800" stroke="#dedede" stroke-width="2.600"/>
<path d="M482 705.600V726L497.600 715.800Z" fill="url(#hv1)" stroke="#555" stroke-width="0.700"/><path d="M513.200 705.600V726L497.600 715.800Z" fill="url(#hv2)" stroke="#555" stroke-width="0.700"/>
<rect x="485.500" y="708" width="2.500" height="15.600" fill="#000"/><rect x="507.300" y="708" width="2.500" height="15.600" fill="#000"/></svg>
<div class="a" style="left:274px;top:569px;width:13px;height:12px;background:#a8a8a8;border:1px solid #888;font-weight:bold;font-size:10px;line-height:11px;text-align:center">I</div>
<div class="a" style="left:288px;top:569px;width:63px;height:12px;background:#fff"></div>
<div class="val" style="left:288px;top:568px;width:60px;line-height:15px;font-size:14px">0.00</div>
<div class="a" style="left:454px;top:572px;width:12px;height:10px;background:#fff;color:#f00;font-weight:bold;font-size:9px;line-height:10px;text-align:center">F</div>
<div class="m" style="left:8px;top:199.5px">M</div>
<div class="m" style="left:8px;top:265.5px">M</div>
<div class="m" style="left:8px;top:482px">M</div>
<div class="m" style="left:288px;top:522.5px">M</div>
<div class="m" style="left:47.5px;top:567px">M</div>
<div class="m" style="left:178px;top:567.5px">M</div>
</div>
<div class="a" style="left:336px;top:155px;width:1060px;height:549px;background:#a0a0a0"></div>
<div class="a" style="left:337px;top:156px;width:1059px;height:548px;background:#696969"></div>
<div class="a" style="left:338px;top:157px;width:1058px;height:547px;background:#f0f0f0"></div>
<div class="di" style="left:343px;top:171px;width:158px">2018-08-14 14:25:11</div>
<div class="di" style="left:592px;top:173px;width:158px">2018-08-14 17:10:11</div>
<svg class="a" style="left:474px;top:175px" width="24" height="14" viewBox="0 0 24 14"><rect x="0.500" y="0.500" width="10" height="11.500" rx="1.500" fill="#dcdcdc" stroke="#8a8a8a"/><rect x="2" y="3" width="7" height="7.500" fill="#fff" stroke="#8890a0" stroke-width="0.700"/><path d="M2 5.500H9M2 8H9M4.300 3V10.500M6.700 3V10.500" stroke="#8890a0" stroke-width="0.600"/><path d="M10.800 2.500V12.300H2" fill="none" stroke="#b0b0b0"/><path d="M13 4.500H20.500L16.750 9Z" fill="#4a6888"/></svg>
<svg class="a" style="left:723px;top:177px" width="24" height="14" viewBox="0 0 24 14"><rect x="0.500" y="0.500" width="10" height="11.500" rx="1.500" fill="#dcdcdc" stroke="#8a8a8a"/><rect x="2" y="3" width="7" height="7.500" fill="#fff" stroke="#8890a0" stroke-width="0.700"/><path d="M2 5.500H9M2 8H9M4.300 3V10.500M6.700 3V10.500" stroke="#8890a0" stroke-width="0.600"/><path d="M10.800 2.500V12.300H2" fill="none" stroke="#b0b0b0"/><path d="M13 4.500H20.500L16.750 9Z" fill="#4a6888"/></svg>
<div class="a" style="left:505px;top:176px;font-size:12px;line-height:16px;white-space:nowrap;letter-spacing:0.800px">&lt;-时间范围-&gt;</div>
<div class="a" style="left:760px;top:173px;width:73px;height:21px;border:1px solid #7a7a7a;background:#fff;font-size:12px;line-height:18px;padding-left:2px;white-space:nowrap">普通报表<svg class="a" style="left:58px;top:7px" width="10" height="6" viewBox="0 0 10 6"><path d="M1 0.800L5 4.800L9 0.800" fill="none" stroke="#444" stroke-width="1.100"/></svg></div>
<div class="tb" style="left:845px;top:169px;width:42px;height:27px;line-height:24px;font-size:13px">查询</div>
<div class="tb" style="left:894px;top:169px;width:42px;height:27px;line-height:24px;font-size:13px">打印</div>
<div class="tb" style="left:943px;top:169px;width:68px;height:27px;line-height:24px;font-size:13px">打印设置</div>
<div class="tb" style="left:1019px;top:169px;width:42px;height:27px;line-height:24px;font-size:13px">关于</div>
<div class="a" style="left:338px;top:218px;width:1058px;height:2px;background:#2f8fe6"></div>
<div class="a" style="left:338px;top:220px;width:99px;height:483px;background:#fff;border:1px solid #7a8088;border-top:none"></div>
<div class="a" style="left:437px;top:220px;width:2px;height:483px;background:#2f8fe6"></div>
<svg class="a" style="left:348px;top:226px" width="16" height="16" viewBox="0 0 16 16"><rect x="0.500" y="0.500" width="8" height="8" rx="1" fill="#f4f4f4" stroke="#909090"/><path d="M2.500 4.500H6.500M4.500 2.500V6.500" stroke="#283c78" stroke-width="1"/><path d="M10 4.500H14" stroke="#888" stroke-dasharray="1 1"/><path d="M4.500 10V16" stroke="#888" stroke-dasharray="1 1"/></svg>
<div class="tree" style="left:364px;top:223px">产量报表</div>
<svg class="a" style="left:348px;top:242px" width="16" height="16" viewBox="0 0 16 16"><rect x="0.500" y="0.500" width="8" height="8" rx="1" fill="#f4f4f4" stroke="#909090"/><path d="M2.500 4.500H6.500M4.500 2.500V6.500" stroke="#283c78" stroke-width="1"/><path d="M10 4.500H14" stroke="#888" stroke-dasharray="1 1"/><path d="M4.500 10V16" stroke="#888" stroke-dasharray="1 1"/></svg>
<div class="tree" style="left:364px;top:239px">单元格报表</div>
<svg class="a" style="left:348px;top:258px" width="16" height="16" viewBox="0 0 16 16"><rect x="0.500" y="0.500" width="8" height="8" rx="1" fill="#f4f4f4" stroke="#909090"/><path d="M2.500 4.500H6.500M4.500 2.500V6.500" stroke="#283c78" stroke-width="1"/><path d="M10 4.500H14" stroke="#888" stroke-dasharray="1 1"/><path d="M4.500 10V16" stroke="#888" stroke-dasharray="1 1"/></svg>
<div class="tree" style="left:364px;top:255px">定时抄表</div>
<svg class="a" style="left:348px;top:274px" width="16" height="16" viewBox="0 0 16 16"><rect x="0.500" y="0.500" width="8" height="8" rx="1" fill="#f4f4f4" stroke="#909090"/><path d="M2.500 4.500H6.500M4.500 2.500V6.500" stroke="#283c78" stroke-width="1"/><path d="M10 4.500H14" stroke="#888" stroke-dasharray="1 1"/></svg>
<div class="tree" style="left:364px;top:271px">触发抄表</div>
<div class="a" style="left:439px;top:220px;width:939px;height:467px;background:#fff"></div>
<div class="a" style="left:439px;top:220px;width:41px;height:18px;background:#e6e6fa;border-right:1px solid #d8d8ec"></div>
<svg class="a" style="left:465px;top:224px" width="11" height="11"><path d="M10 1V10H1Z" fill="#c4c4cc"/></svg>
<div class="ch" style="left:480px;width:88px">A</div>
<div class="ch" style="left:568px;width:64px">B</div>
<div class="ch" style="left:632px;width:70px">C</div>
<div class="ch" style="left:702px;width:64px">D</div>
<div class="ch" style="left:766px;width:57px">E</div>
<div class="ch" style="left:823px;width:53px">F</div>
<div class="ch" style="left:876px;width:53px">G</div>
<div class="ch" style="left:929px;width:53px">H</div>
<div class="ch" style="left:982px;width:59px">I</div>
<div class="ch" style="left:1041px;width:61px">J</div>
<div class="ch" style="left:1102px;width:61px">K</div>
<div class="ch" style="left:1163px;width:61px">L</div>
<div class="ch" style="left:1224px;width:57px">M</div>
<div class="ch" style="left:1281px;width:70px;color:#14145a">N</div>
<div class="rh" style="top:239px;height:52px;line-height:51px;background:#fffacd;border-bottom-color:#e8d890;">1</div>
<div class="rh" style="top:291px;height:51px;line-height:50px;">2</div>
<div class="rh" style="top:342px;height:39px;line-height:38px;">3</div>
<div class="rh" style="top:381px;height:25px;line-height:24px;">4</div>
<div class="rh" style="top:406px;height:25px;line-height:24px;">5</div>
<div class="rh" style="top:431px;height:25px;line-height:24px;">6</div>
<div class="rh" style="top:456px;height:25px;line-height:24px;">7</div>
<div class="rh" style="top:481px;height:25px;line-height:24px;">8</div>
<div class="rh" style="top:506px;height:25px;line-height:24px;">9</div>
<div class="rh" style="top:531px;height:25px;line-height:24px;">10</div>
<div class="rh" style="top:556px;height:25px;line-height:24px;">11</div>
<div class="rh" style="top:581px;height:25px;line-height:24px;">12</div>
<div class="rh" style="top:606px;height:25px;line-height:24px;color:#f00;">13</div>
<div class="rh" style="top:631px;height:25px;line-height:24px;">14</div>
<div class="rh" style="top:656px;height:25px;line-height:24px;">15</div>
<div class="rh" style="top:681px;height:6px;border-bottom:none"></div>
<div class="a" style="left:479px;top:291px;width:1px;height:396px;background:#000"></div>
<div class="c b" style="left:480px;top:239px;width:871px;height:52px;line-height:51px;font-size:18.500px;color:#00f;border:none;">触发记录报表</div>
<div class="c b" style="left:480px;top:291px;width:152px;height:51px;line-height:50px;font-size:15px;color:#00f;">日期时间</div>
<div class="c zh" style="left:632px;top:291px;width:70px;height:51px;line-height:50px;">班组</div>
<div class="c hd" style="left:702px;top:291px;width:64px;height:51px;padding-top:8px;">进水口<br>温度<i>℃</i></div>
<div class="c hd" style="left:766px;top:291px;width:57px;height:51px;padding-top:8px;">出水口<br>温度<i>℃</i></div>
<div class="c hd" style="left:823px;top:291px;width:53px;height:51px;padding-top:8px;">水池<br>温度<i>℃</i></div>
<div class="c hd" style="left:876px;top:291px;width:53px;height:51px;padding-top:8px;">氨水<br>温度<i>℃</i></div>
<div class="c hd" style="left:929px;top:291px;width:53px;height:51px;padding-top:8px;">进水<br>压力<i>Pa</i></div>
<div class="c hd" style="left:982px;top:291px;width:59px;height:51px;padding-top:8px;">出水<br>压力<i>Pa</i></div>
<div class="c hd" style="left:1041px;top:291px;width:61px;height:51px;padding-top:8px;">氨水<br>压力<i>Pa</i></div>
<div class="c hd" style="left:1102px;top:291px;width:61px;height:51px;padding-top:8px;">进水泵<br>电流<i>A</i></div>
<div class="c hd" style="left:1163px;top:291px;width:61px;height:51px;padding-top:8px;">排水泵<br>电流<i>A</i></div>
<div class="c hd" style="left:1224px;top:291px;width:57px;height:51px;padding-top:8px;">氨水泵<br>电流<i>A</i></div>
<div class="c zh l" style="left:1281px;top:291px;width:70px;height:51px;line-height:50px;">备注</div>
<div class="c b" style="left:480px;top:342px;width:222px;height:39px;line-height:38px;font-size:15px;color:#00f;">报警值范围</div>
<div class="c l" style="left:702px;top:342px;width:64px;height:39px;line-height:40px;letter-spacing:-0.700px;">15-95</div>
<div class="c l" style="left:766px;top:342px;width:57px;height:39px;line-height:40px;letter-spacing:-0.700px;">20-95</div>
<div class="c l" style="left:823px;top:342px;width:53px;height:39px;line-height:40px;letter-spacing:-0.700px;">25-80</div>
<div class="c l" style="left:876px;top:342px;width:53px;height:39px;line-height:40px;letter-spacing:-0.700px;">12-50</div>
<div class="c l" style="left:929px;top:342px;width:53px;height:39px;line-height:40px;letter-spacing:-0.100px;">3.0-6.0</div>
<div class="c l" style="left:982px;top:342px;width:59px;height:39px;line-height:40px;letter-spacing:-0.100px;">2.0-4.0</div>
<div class="c l" style="left:1041px;top:342px;width:61px;height:39px;line-height:40px;letter-spacing:-0.100px;">2.3-4.0</div>
<div class="c l" style="left:1102px;top:342px;width:61px;height:39px;line-height:40px;letter-spacing:-0.700px;">83-95</div>
<div class="c l" style="left:1163px;top:342px;width:61px;height:39px;line-height:40px;letter-spacing:-0.700px;">320-420</div>
<div class="c l" style="left:1224px;top:342px;width:57px;height:39px;line-height:40px;letter-spacing:-0.700px;">33-45</div>
<div class="c l" style="left:1281px;top:342px;width:70px;height:39px;line-height:40px;letter-spacing:-0.700px;"></div>
<div class="c  rg dt" style="left:480px;top:381px;width:88px;height:25px;line-height:26px;">8/14/2018</div>
<div class="c " style="left:568px;top:381px;width:64px;height:25px;line-height:26px;">14:28:09</div>
<div class="c  zh" style="left:632px;top:381px;width:70px;height:25px;line-height:24px;">早班</div>
<div class="c " style="left:702px;top:381px;width:64px;height:25px;line-height:26px;">30</div>
<div class="c " style="left:766px;top:381px;width:57px;height:25px;line-height:26px;">84.1</div>
<div class="c " style="left:823px;top:381px;width:53px;height:25px;line-height:26px;">72.2</div>
<div class="c r" style="left:875px;top:380px;width:54px;height:26px;line-height:27px;padding-left:1px;padding-top:1px;">52</div>
<div class="c r" style="left:928px;top:380px;width:54px;height:26px;line-height:27px;padding-left:1px;padding-top:1px;">7.2</div>
<div class="c " style="left:982px;top:381px;width:59px;height:25px;line-height:26px;">4</div>
<div class="c rt" style="left:1041px;top:381px;width:61px;height:25px;line-height:26px;">0</div>
<div class="c rt" style="left:1102px;top:381px;width:61px;height:25px;line-height:26px;">81.1</div>
<div class="c rt" style="left:1163px;top:381px;width:61px;height:25px;line-height:26px;">221</div>
<div class="c " style="left:1224px;top:381px;width:57px;height:25px;line-height:26px;">42.1</div>
<div class="c " style="left:1281px;top:381px;width:70px;height:25px;line-height:26px;"></div>
<div class="c  rg dt" style="left:480px;top:406px;width:88px;height:25px;line-height:26px;">8/14/2018</div>
<div class="c " style="left:568px;top:406px;width:64px;height:25px;line-height:26px;">14:31:24</div>
<div class="c  zh" style="left:632px;top:406px;width:70px;height:25px;line-height:24px;">早班</div>
<div class="c " style="left:702px;top:406px;width:64px;height:25px;line-height:26px;">82.1</div>
<div class="c " style="left:766px;top:406px;width:57px;height:25px;line-height:26px;">45</div>
<div class="c " style="left:823px;top:406px;width:53px;height:25px;line-height:26px;">60.1</div>
<div class="c " style="left:876px;top:406px;width:53px;height:25px;line-height:26px;">26.2</div>
<div class="c " style="left:929px;top:406px;width:53px;height:25px;line-height:26px;">4</div>
<div class="c " style="left:982px;top:406px;width:59px;height:25px;line-height:26px;">2</div>
<div class="c rt" style="left:1041px;top:406px;width:61px;height:25px;line-height:26px;">0</div>
<div class="c r" style="left:1101px;top:405px;width:62px;height:26px;line-height:27px;padding-left:1px;padding-top:1px;">98.1</div>
<div class="c rt" style="left:1163px;top:406px;width:61px;height:25px;line-height:26px;">289</div>
<div class="c rt" style="left:1224px;top:406px;width:57px;height:25px;line-height:26px;">31.3</div>
<div class="c " style="left:1281px;top:406px;width:70px;height:25px;line-height:26px;"></div>
<div class="c  rg dt" style="left:480px;top:431px;width:88px;height:25px;line-height:26px;">8/14/2018</div>
<div class="c " style="left:568px;top:431px;width:64px;height:25px;line-height:26px;">14:34:38</div>
<div class="c  zh" style="left:632px;top:431px;width:70px;height:25px;line-height:24px;">早班</div>
<div class="c " style="left:702px;top:431px;width:64px;height:25px;line-height:26px;">75.5</div>
<div class="c " style="left:766px;top:431px;width:57px;height:25px;line-height:26px;">48.2</div>
<div class="c " style="left:823px;top:431px;width:53px;height:25px;line-height:26px;">32.1</div>
<div class="c r" style="left:875px;top:430px;width:54px;height:26px;line-height:27px;padding-left:1px;padding-top:1px;">51</div>
<div class="c " style="left:929px;top:431px;width:53px;height:25px;line-height:26px;">3.25</div>
<div class="c " style="left:982px;top:431px;width:59px;height:25px;line-height:26px;">4</div>
<div class="c rt" style="left:1041px;top:431px;width:61px;height:25px;line-height:26px;">2</div>
<div class="c r" style="left:1101px;top:430px;width:62px;height:26px;line-height:27px;padding-left:1px;padding-top:1px;">97.5</div>
<div class="c r" style="left:1162px;top:430px;width:62px;height:26px;line-height:27px;padding-left:1px;padding-top:1px;">436</div>
<div class="c rt" style="left:1224px;top:431px;width:57px;height:25px;line-height:26px;">32.1</div>
<div class="c " style="left:1281px;top:431px;width:70px;height:25px;line-height:26px;"></div>
<div class="c  rg dt" style="left:480px;top:456px;width:88px;height:25px;line-height:26px;">8/14/2018</div>
<div class="c " style="left:568px;top:456px;width:64px;height:25px;line-height:26px;">14:37:53</div>
<div class="c  zh" style="left:632px;top:456px;width:70px;height:25px;line-height:24px;">早班</div>
<div class="c " style="left:702px;top:456px;width:64px;height:25px;line-height:26px;">21</div>
<div class="c " style="left:766px;top:456px;width:57px;height:25px;line-height:26px;">89.5</div>
<div class="c " style="left:823px;top:456px;width:53px;height:25px;line-height:26px;">38</div>
<div class="c " style="left:876px;top:456px;width:53px;height:25px;line-height:26px;">35.2</div>
<div class="c r" style="left:928px;top:455px;width:54px;height:26px;line-height:27px;padding-left:1px;padding-top:1px;">7.25</div>
<div class="c r" style="left:981px;top:455px;width:60px;height:26px;line-height:27px;padding-left:1px;padding-top:1px;">5</div>
<div class="c " style="left:1041px;top:456px;width:61px;height:25px;line-height:26px;">4</div>
<div class="c rt" style="left:1102px;top:456px;width:61px;height:25px;line-height:26px;">82.2</div>
<div class="c " style="left:1163px;top:456px;width:61px;height:25px;line-height:26px;">413</div>
<div class="c r" style="left:1223px;top:455px;width:58px;height:26px;line-height:27px;padding-left:1px;padding-top:1px;">48.2</div>
<div class="c " style="left:1281px;top:456px;width:70px;height:25px;line-height:26px;"></div>
<div class="c  rg dt" style="left:480px;top:481px;width:88px;height:25px;line-height:26px;">8/14/2018</div>
<div class="c " style="left:568px;top:481px;width:64px;height:25px;line-height:26px;">14:41:08</div>
<div class="c  zh" style="left:632px;top:481px;width:70px;height:25px;line-height:24px;">早班</div>
<div class="c " style="left:702px;top:481px;width:64px;height:25px;line-height:26px;">15.1</div>
<div class="c " style="left:766px;top:481px;width:57px;height:25px;line-height:26px;">76.1</div>
<div class="c " style="left:823px;top:481px;width:53px;height:25px;line-height:26px;">56</div>
<div class="c r" style="left:875px;top:480px;width:54px;height:26px;line-height:27px;padding-left:1px;padding-top:1px;">60</div>
<div class="c r" style="left:928px;top:480px;width:54px;height:26px;line-height:27px;padding-left:1px;padding-top:1px;">6.5</div>
<div class="c " style="left:982px;top:481px;width:59px;height:25px;line-height:26px;">3</div>
<div class="c rt" style="left:1041px;top:481px;width:61px;height:25px;line-height:26px;">1</div>
<div class="c " style="left:1102px;top:481px;width:61px;height:25px;line-height:26px;">86.2</div>
<div class="c r" style="left:1162px;top:480px;width:62px;height:26px;line-height:27px;padding-left:1px;padding-top:1px;">447</div>
<div class="c " style="left:1224px;top:481px;width:57px;height:25px;line-height:26px;">33.3</div>
<div class="c " style="left:1281px;top:481px;width:70px;height:25px;line-height:26px;"></div>
<div class="c  rg dt" style="left:480px;top:506px;width:88px;height:25px;line-height:26px;">8/14/2018</div>
<div class="c " style="left:568px;top:506px;width:64px;height:25px;line-height:26px;">14:44:24</div>
<div class="c  zh" style="left:632px;top:506px;width:70px;height:25px;line-height:24px;">早班</div>
<div class="c " style="left:702px;top:506px;width:64px;height:25px;line-height:26px;">46.2</div>
<div class="c " style="left:766px;top:506px;width:57px;height:25px;line-height:26px;">24.5</div>
<div class="c " style="left:823px;top:506px;width:53px;height:25px;line-height:26px;">79.1</div>
<div class="c " style="left:876px;top:506px;width:53px;height:25px;line-height:26px;">32.1</div>
<div class="c r" style="left:928px;top:505px;width:54px;height:26px;line-height:27px;padding-left:1px;padding-top:1px;">7.5</div>
<div class="c " style="left:982px;top:506px;width:59px;height:25px;line-height:26px;">2</div>
<div class="c rt" style="left:1041px;top:506px;width:61px;height:25px;line-height:26px;">1</div>
<div class="c r" style="left:1101px;top:505px;width:62px;height:26px;line-height:27px;padding-left:1px;padding-top:1px;">97.5</div>
<div class="c r" style="left:1162px;top:505px;width:62px;height:26px;line-height:27px;padding-left:1px;padding-top:1px;">479</div>
<div class="c rt" style="left:1224px;top:506px;width:57px;height:25px;line-height:26px;">29.3</div>
<div class="c " style="left:1281px;top:506px;width:70px;height:25px;line-height:26px;"></div>
<div class="c  l zh" style="left:480px;top:531px;width:88px;height:25px;line-height:24px;">最大值</div>
<div class="c  zh" style="left:568px;top:531px;width:64px;height:25px;line-height:24px;">最大值</div>
<div class="c  zh" style="left:632px;top:531px;width:70px;height:25px;line-height:24px;">所有</div>
<div class="c " style="left:702px;top:531px;width:64px;height:25px;line-height:26px;">82.1</div>
<div class="c " style="left:766px;top:531px;width:57px;height:25px;line-height:26px;">89.5</div>
<div class="c " style="left:823px;top:531px;width:53px;height:25px;line-height:26px;">79.1</div>
<div class="c " style="left:876px;top:531px;width:53px;height:25px;line-height:26px;">60</div>
<div class="c " style="left:929px;top:531px;width:53px;height:25px;line-height:26px;">7.5</div>
<div class="c " style="left:982px;top:531px;width:59px;height:25px;line-height:26px;">5</div>
<div class="c " style="left:1041px;top:531px;width:61px;height:25px;line-height:26px;">4</div>
<div class="c " style="left:1102px;top:531px;width:61px;height:25px;line-height:26px;">98.1</div>
<div class="c " style="left:1163px;top:531px;width:61px;height:25px;line-height:26px;">479</div>
<div class="c " style="left:1224px;top:531px;width:57px;height:25px;line-height:26px;">48.2</div>
<div class="c " style="left:1281px;top:531px;width:70px;height:25px;line-height:26px;"></div>
<div class="c  l zh" style="left:480px;top:556px;width:88px;height:25px;line-height:24px;">最小值</div>
<div class="c  zh" style="left:568px;top:556px;width:64px;height:25px;line-height:24px;">最小值</div>
<div class="c  zh" style="left:632px;top:556px;width:70px;height:25px;line-height:24px;">所有</div>
<div class="c " style="left:702px;top:556px;width:64px;height:25px;line-height:26px;">15.1</div>
<div class="c " style="left:766px;top:556px;width:57px;height:25px;line-height:26px;">24.5</div>
<div class="c " style="left:823px;top:556px;width:53px;height:25px;line-height:26px;">32.1</div>
<div class="c " style="left:876px;top:556px;width:53px;height:25px;line-height:26px;">26.2</div>
<div class="c " style="left:929px;top:556px;width:53px;height:25px;line-height:26px;">3.25</div>
<div class="c " style="left:982px;top:556px;width:59px;height:25px;line-height:26px;">2</div>
<div class="c " style="left:1041px;top:556px;width:61px;height:25px;line-height:26px;">0</div>
<div class="c " style="left:1102px;top:556px;width:61px;height:25px;line-height:26px;">81.1</div>
<div class="c " style="left:1163px;top:556px;width:61px;height:25px;line-height:26px;">221</div>
<div class="c " style="left:1224px;top:556px;width:57px;height:25px;line-height:26px;">29.3</div>
<div class="c " style="left:1281px;top:556px;width:70px;height:25px;line-height:26px;"></div>
<div class="c  l zh" style="left:480px;top:581px;width:88px;height:25px;line-height:24px;">平均值</div>
<div class="c  zh" style="left:568px;top:581px;width:64px;height:25px;line-height:24px;">平均值</div>
<div class="c  zh" style="left:632px;top:581px;width:70px;height:25px;line-height:24px;">所有</div>
<div class="c " style="left:702px;top:581px;width:64px;height:25px;line-height:26px;">45</div>
<div class="c " style="left:766px;top:581px;width:57px;height:25px;line-height:26px;">61.2</div>
<div class="c " style="left:823px;top:581px;width:53px;height:25px;line-height:26px;">56.3</div>
<div class="c " style="left:876px;top:581px;width:53px;height:25px;line-height:26px;">42.8</div>
<div class="c " style="left:929px;top:581px;width:53px;height:25px;line-height:26px;">5.95</div>
<div class="c " style="left:982px;top:581px;width:59px;height:25px;line-height:26px;">3.33</div>
<div class="c " style="left:1041px;top:581px;width:61px;height:25px;line-height:26px;">1.33</div>
<div class="c " style="left:1102px;top:581px;width:61px;height:25px;line-height:26px;">90.4</div>
<div class="c " style="left:1163px;top:581px;width:61px;height:25px;line-height:26px;">380.8</div>
<div class="c " style="left:1224px;top:581px;width:57px;height:25px;line-height:26px;">36.1</div>
<div class="c " style="left:1281px;top:581px;width:70px;height:25px;line-height:26px;"></div>
<div class="c b" style="left:480px;top:606px;width:502px;height:25px;line-height:24px;font-size:15px;border-right:none;">工艺参数说明:超上限, 背景变红色;超下线, 字体变红色</div>
<div class="a" style="left:981px;top:604px;width:370px;height:2px;background:#000"></div>
<div class="a" style="left:981px;top:629px;width:370px;height:2px;background:#000"></div>
<div class="a" style="left:981px;top:654px;width:370px;height:2px;background:#000"></div>
<div class="a" style="left:981px;top:679px;width:370px;height:2px;background:#000"></div>
<div class="a" style="left:980px;top:604px;width:2px;height:83px;background:#000"></div>
<div class="a" style="left:1100px;top:604px;width:2px;height:26px;background:#000"></div>
<div class="a" style="left:1350px;top:604px;width:1px;height:83px;background:#000"></div>
<div class="a" style="left:1039px;top:630px;width:2px;height:57px;background:#000"></div>
<div class="a" style="left:1161px;top:630px;width:2px;height:57px;background:#000"></div>
<div class="a" style="left:1222px;top:630px;width:2px;height:57px;background:#000"></div>
<div class="a" style="left:982px;top:606px;width:118px;height:24px;line-height:23px;text-align:center;font-weight:bold;font-size:14.700px;font-family:'Liberation Serif','Noto Serif CJK SC',serif">生产单位</div>
<div class="a" style="left:982px;top:631px;width:57px;height:24px;line-height:23px;text-align:center;font-weight:bold;font-size:14.700px;font-family:'Liberation Serif','Noto Serif CJK SC',serif">设计</div>
<div class="a" style="left:982px;top:656px;width:57px;height:24px;line-height:23px;text-align:center;font-weight:bold;font-size:14.700px;font-family:'Liberation Serif','Noto Serif CJK SC',serif">审核</div>
<div class="a" style="left:1163px;top:631px;width:59px;height:24px;line-height:23px;text-align:center;font-weight:bold;font-size:14.700px;font-family:'Liberation Serif','Noto Serif CJK SC',serif">组长</div>
<div class="a" style="left:1163px;top:656px;width:59px;height:24px;line-height:23px;text-align:center;font-weight:bold;font-size:14.700px;font-family:'Liberation Serif','Noto Serif CJK SC',serif">操作员</div>
<div class="a" style="left:479px;top:238px;width:873px;height:53px;border:2px solid #2f8fe6"></div>
<div class="a" style="left:1348px;top:287px;width:5px;height:5px;background:#2f8fe6;border:1px solid #fff"></div>
<div class="a" style="left:1378px;top:220px;width:17px;height:467px;background:#f0f0f0"></div>
<div class="a" style="left:1378px;top:237px;width:15px;height:342px;background:#cdcdcd"></div>
<svg class="a" style="left:1380px;top:225px" width="11" height="8"><path d="M1.500 6.500L5.500 2.500L9.500 6.500" fill="none" stroke="#505050" stroke-width="1.800"/></svg>
<svg class="a" style="left:1380px;top:673px" width="11" height="8"><path d="M1.500 1.500L5.500 5.500L9.500 1.500" fill="none" stroke="#505050" stroke-width="1.800"/></svg>
<div class="a" style="left:439px;top:687px;width:957px;height:16px;background:#f0f0f0"></div>
<div class="a" style="left:456px;top:687px;width:837px;height:15px;background:#cdcdcd"></div>
<svg class="a" style="left:444px;top:689px" width="8" height="11"><path d="M6.500 1.500L2.500 5.500L6.500 9.500" fill="none" stroke="#505050" stroke-width="1.800"/></svg>
<svg class="a" style="left:1365px;top:689px" width="8" height="11"><path d="M1.500 1.500L5.500 5.500L1.500 9.500" fill="none" stroke="#505050" stroke-width="1.800"/></svg>
<div class="a" style="left:336px;top:703px;width:1060px;height:1px;background:#fff"></div>
<div class="a" style="left:337px;top:704px;width:1059px;height:1px;background:#eaeaea"></div>
<div class="a" style="left:1395px;top:155px;width:1px;height:549px;background:#fff"></div>
<div class="a" style="left:1406px;top:155px;width:17px;height:579px;background:#f0f0f0"></div>
<div class="a" style="left:1407px;top:172px;width:15px;height:546px;background:#cdcdcd"></div>
<svg class="a" style="left:1409px;top:160px" width="11" height="8"><path d="M1.500 6.500L5.500 2.500L9.500 6.500" fill="none" stroke="#505050" stroke-width="1.800"/></svg>
</body></html>
